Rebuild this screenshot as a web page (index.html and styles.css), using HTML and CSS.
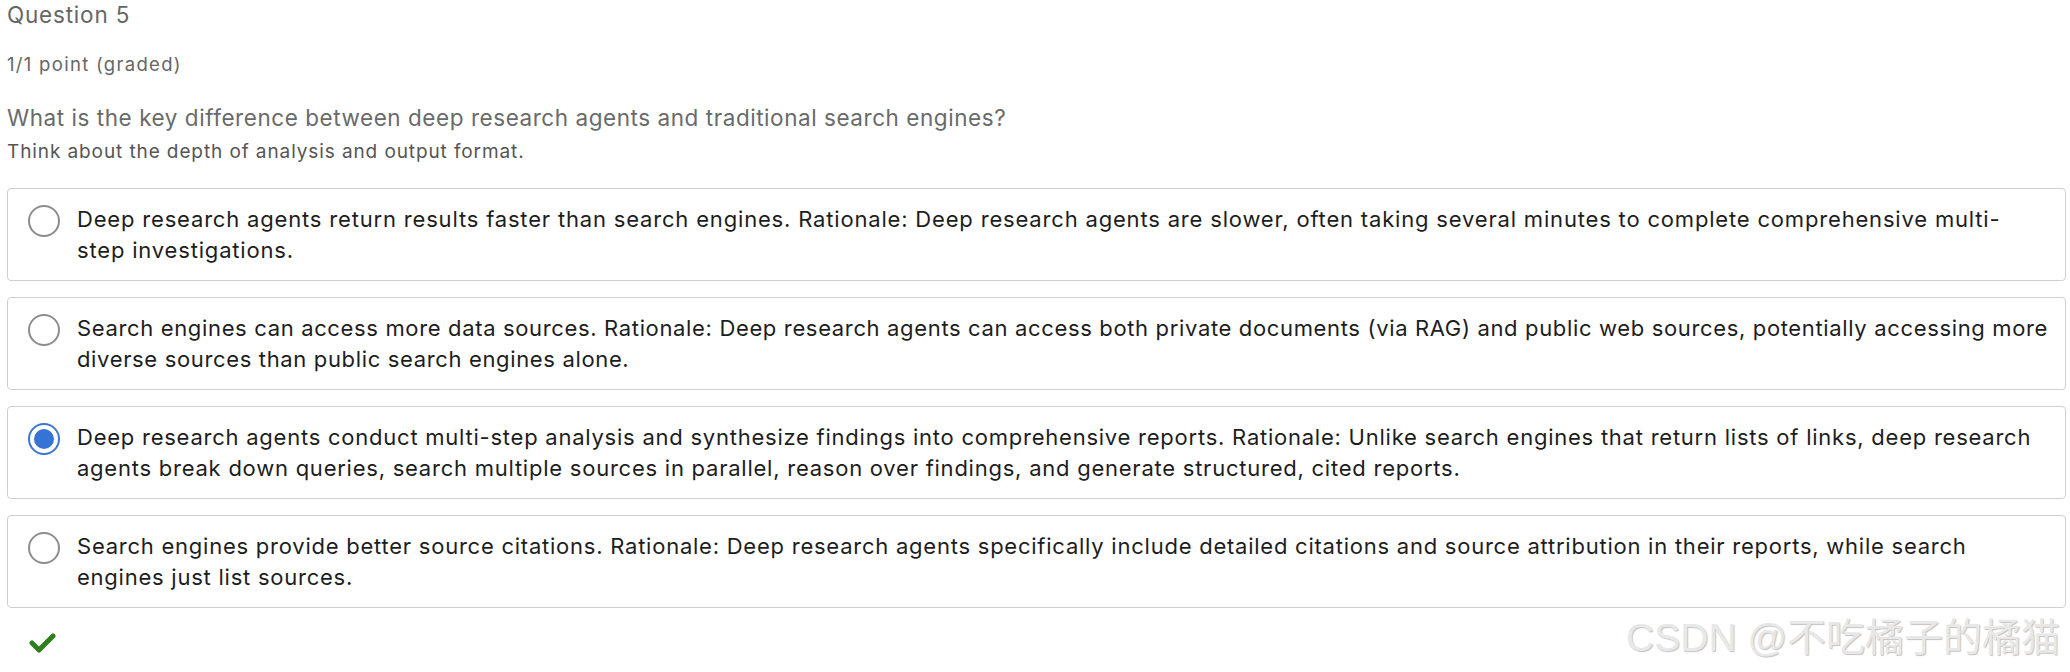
FILE: index.html
```html
<!DOCTYPE html>
<html lang="en">
<head>
<meta charset="utf-8">
<title>Question 5</title>
<link rel="stylesheet" href="styles.css">
</head>
<body>
<div class="problem">
  <h3 class="title">Question 5</h3>
  <div class="points">1/1 point (graded)</div>
  <p class="prompt">What is the key difference between deep research agents and traditional search engines?</p>
  <p class="hint">Think about the depth of analysis and output format.</p>
  <div class="choices">
    <label class="choice">
      <span class="radio"></span>
      <span class="text text-wide">Deep research agents return results faster than search engines. Rationale: Deep research agents are slower, often taking several minutes to complete comprehensive multi-<br>step investigations.</span>
    </label>
    <label class="choice">
      <span class="radio"></span>
      <span class="text text-tight">Search engines can access more data sources. Rationale: Deep research agents can access both private documents (via RAG) and public web sources, potentially accessing more<br>diverse sources than public search engines alone.</span>
    </label>
    <label class="choice">
      <span class="radio checked"></span>
      <span class="text">Deep research agents conduct multi-step analysis and synthesize findings into comprehensive reports. Rationale: Unlike search engines that return lists of links, deep research<br>agents break down queries, search multiple sources in parallel, reason over findings, and generate structured, cited reports.</span>
    </label>
    <label class="choice">
      <span class="radio"></span>
      <span class="text">Search engines provide better source citations. Rationale: Deep research agents specifically include detailed citations and source attribution in their reports, while search<br>engines just list sources.</span>
    </label>
  </div>
  <div class="status">
    <svg width="28" height="22" viewBox="0 0 28 22"><polyline points="3,11 10,18 24,4" fill="none" stroke="#2e7d1f" stroke-width="5" stroke-linecap="round" stroke-linejoin="round"/></svg>
  </div>
</div>
<div class="watermark">CSDN @不吃橘子的橘猫</div>
</body>
</html>
```

FILE: styles.css
```css
html, body {
  margin: 0;
  padding: 0;
  background: #ffffff;
}
body {
  font-family: "Inter", "Open Sans", sans-serif;
  width: 2070px;
  height: 672px;
  overflow: hidden;
  position: relative;
}
.problem {
  padding: 0 4px 0 7px;
}
.title {
  margin: 0;
  padding-top: 2px;
  font-size: 22.5px;
  font-weight: 400;
  line-height: 26px;
  letter-spacing: 0.8px;
  color: #666;
}
.points {
  margin-top: 25px;
  font-size: 18.5px;
  line-height: 22px;
  letter-spacing: 1.3px;
  color: #666;
}
.prompt {
  margin: 29px 0 0;
  font-size: 22.5px;
  line-height: 28px;
  letter-spacing: 0.55px;
  color: #6a6a6a;
}
.hint {
  margin: 8px 0 0;
  font-size: 19px;
  line-height: 24px;
  letter-spacing: 0.9px;
  color: #555;
}
.choices {
  margin-top: 24px;
  display: flex;
  flex-direction: column;
  gap: 16px;
}
.choice {
  display: flex;
  align-items: flex-start;
  height: 93px;
  box-sizing: border-box;
  border: 1px solid #cfcfcf;
  border-radius: 4px;
  padding: 15px 10px 0 20px;
}
.radio {
  flex: none;
  width: 32px;
  height: 32px;
  box-sizing: border-box;
  border: 2px solid #8d8d8d;
  border-radius: 50%;
  margin-top: 1px;
  margin-right: 17px;
  background: #fff;
}
.radio.checked {
  border: 2px solid #3b77d1;
  padding: 4px;
  background: #3574d4;
  background-clip: content-box;
}
.text {
  font-size: 22px;
  line-height: 31px;
  letter-spacing: 0.76px;
  color: #1d1d1d;
  white-space: nowrap;
}
.text-wide {
  letter-spacing: 0.82px;
}
.text-tight {
  letter-spacing: 0.65px;
}
.status {
  padding: 24px 0 0 22px;
}
.status svg {
  display: block;
}
.watermark {
  position: absolute;
  right: 10px;
  bottom: 10px;
  font-family: "Liberation Sans", "Noto Sans CJK SC", sans-serif;
  font-size: 39px;
  color: #e8e8e8;
  text-shadow: 1px 1px 1px #c2c2c2;
}
```
